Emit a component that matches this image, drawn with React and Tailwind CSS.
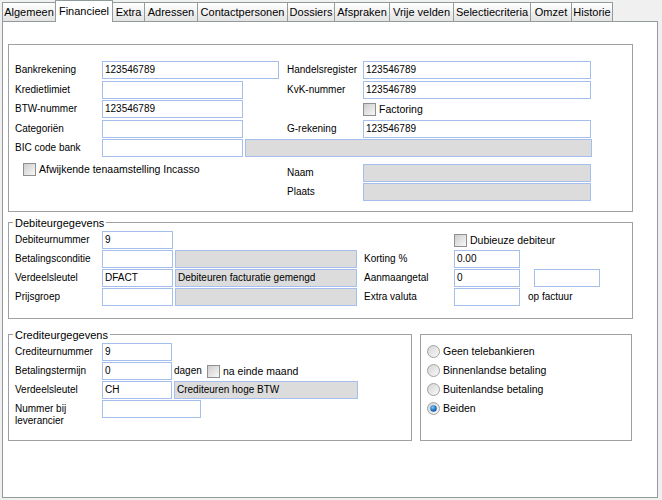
import React from "react";

function Label({ className = "w-[87px]", children }) {
  return <div className={`${className} shrink-0 text-[10px] leading-[12px] whitespace-nowrap`}>{children}</div>;
}

function Field({ className, gray, children }) {
  return (
    <div
      className={`${className} h-[18px] shrink-0 border border-[#a5bfec] ${gray ? "bg-[#dcdcdc]" : "bg-white"} px-[2px] text-[10px] leading-[16px] whitespace-nowrap overflow-hidden`}
    >
      {children}
    </div>
  );
}

function Check({ label }) {
  return (
    <div className="flex items-center">
      <span className="block h-[13px] w-[13px] shrink-0 border border-[#8e8f8f] bg-linear-to-br from-[#cdcdcd] to-[#f8f8f8]" />
      <span className="ml-[3px] text-[10.5px] leading-[13px] whitespace-nowrap">{label}</span>
    </div>
  );
}

function Radio({ label, checked, id }) {
  return (
    <div className="flex h-[19px] items-center">
      <svg width="13" height="13" viewBox="0 0 13 13" className="shrink-0">
        <defs>
          <linearGradient id={`rg${id}`} x1="0" y1="0" x2="1" y2="1">
            <stop offset="0" stopColor="#d2d2d2" />
            <stop offset="1" stopColor="#fbfbfb" />
          </linearGradient>
          <radialGradient id={`rb${id}`} cx="0.4" cy="0.35" r="0.7">
            <stop offset="0" stopColor="#8fcaf5" />
            <stop offset="0.5" stopColor="#2a83d3" />
            <stop offset="1" stopColor="#0a4a8f" />
          </radialGradient>
        </defs>
        <circle cx="6.5" cy="6.5" r="6" fill={`url(#rg${id})`} stroke="#a2a2a2" strokeWidth="1" />
        {checked && <circle cx="6.5" cy="6.5" r="3.2" fill={`url(#rb${id})`} />}
      </svg>
      <span className="ml-[3px] text-[10.5px] leading-[13px] whitespace-nowrap">{label}</span>
    </div>
  );
}

function Legend({ children }) {
  return (
    <span className="absolute left-[4px] top-[-7px] bg-white px-[2px] text-[11px] leading-[14px]">{children}</span>
  );
}

const tabBase = "h-[19px] shrink-0 border-t border-[#919b9c] bg-linear-to-b from-white to-[#e3e3e3] text-center text-[11px] leading-[18px] whitespace-nowrap";

export default function App() {
  return (
    <div className="h-[500px] w-[662px] overflow-hidden bg-[#f0f0f0] font-['Liberation_Sans',Arial,sans-serif] text-black">
      <div className="relative z-10 flex h-[21px] items-end pl-[2px]">
        <div className={`${tabBase} w-[53px] border-l`}>Algemeen</div>
        <div className="-mb-px h-[22px] w-[58px] shrink-0 border-l border-r border-t border-[#919b9c] bg-white text-center text-[11px] leading-[20px]">Financieel</div>
        <div className={`${tabBase} w-[31px]`}>Extra</div>
        <div className={`${tabBase} w-[53px] border-l`}>Adressen</div>
        <div className={`${tabBase} w-[90px] border-l`}>Contactpersonen</div>
        <div className={`${tabBase} w-[47px] border-l`}>Dossiers</div>
        <div className={`${tabBase} w-[55px] border-l`}>Afspraken</div>
        <div className={`${tabBase} w-[64px] border-l`}>Vrije velden</div>
        <div className={`${tabBase} w-[77px] border-l`}>Selectiecriteria</div>
        <div className={`${tabBase} w-[41px] border-l`}>Omzet</div>
        <div className={`${tabBase} w-[42px] border-l border-r`}>Historie</div>
      </div>

      <div className="ml-[2px] h-[477px] w-[656px] border border-[#919b9c] bg-white pl-[5px] pt-[22px]">
        {/* Group 1 */}
        <div className="w-[625px] border border-[#a0a0a0] pb-[10px] pl-[6px] pt-[16px]">
          <div className="flex h-[18px] items-center">
            <Label>Bankrekening</Label>
            <Field className="w-[177px]">123546789</Field>
            <div className="w-[8px] shrink-0" />
            <Label className="w-[76px]">Handelsregister</Label>
            <Field className="w-[228px]">123546789</Field>
          </div>
          <div className="mt-[2px] flex h-[18px] items-center">
            <Label>Kredietlimiet</Label>
            <Field className="w-[141px]" />
            <div className="w-[44px] shrink-0" />
            <Label className="w-[76px]">KvK-nummer</Label>
            <Field className="w-[228px]">123546789</Field>
          </div>
          <div className="mt-[1px] flex h-[18px] items-center">
            <Label>BTW-nummer</Label>
            <Field className="w-[141px]">123546789</Field>
            <div className="w-[120px] shrink-0" />
            <Check label="Factoring" />
          </div>
          <div className="mt-[2px] flex h-[18px] items-center">
            <Label>Categoriën</Label>
            <Field className="w-[141px]" />
            <div className="w-[44px] shrink-0" />
            <Label className="w-[76px]">G-rekening</Label>
            <Field className="w-[228px]">123546789</Field>
          </div>
          <div className="mt-[1px] flex h-[18px] items-center">
            <Label>BIC code bank</Label>
            <Field className="w-[141px]" />
            <div className="w-[2px] shrink-0" />
            <Field className="w-[347px]" gray />
          </div>
          <div className="mt-[7px] flex h-[18px] items-center">
            <div className="-mt-[1px] flex w-[272px] shrink-0 self-start pl-[8px]">
              <Check label="Afwijkende tenaamstelling Incasso" />
            </div>
            <Label className="w-[76px]">Naam</Label>
            <Field className="w-[228px]" gray />
          </div>
          <div className="mt-[1px] flex h-[18px] items-center">
            <div className="w-[272px] shrink-0" />
            <Label className="w-[76px]">Plaats</Label>
            <Field className="w-[228px]" gray />
          </div>
        </div>

        {/* Group 2 */}
        <div className="relative mt-[10px] w-[625px] border border-[#a0a0a0] pb-[12px] pl-[6px] pt-[8px]">
          <Legend>Debiteurgegevens</Legend>
          <div className="flex h-[18px] items-center">
            <Label>Debiteurnummer</Label>
            <Field className="w-[71px]">9</Field>
            <div className="w-[281px] shrink-0" />
            <Check label="Dubieuze debiteur" />
          </div>
          <div className="mt-[1px] flex h-[18px] items-center">
            <Label>Betalingsconditie</Label>
            <Field className="w-[71px]" />
            <div className="w-[2px] shrink-0" />
            <Field className="w-[182px]" gray />
            <div className="w-[7px] shrink-0" />
            <Label className="w-[90px]">Korting %</Label>
            <Field className="w-[66px]">0.00</Field>
          </div>
          <div className="mt-[1px] flex h-[18px] items-center">
            <Label>Verdeelsleutel</Label>
            <Field className="w-[71px]">DFACT</Field>
            <div className="w-[2px] shrink-0" />
            <Field className="w-[182px]" gray>Debiteuren facturatie gemengd</Field>
            <div className="w-[7px] shrink-0" />
            <Label className="w-[90px]">Aanmaangetal</Label>
            <Field className="w-[66px]">0</Field>
            <div className="w-[14px] shrink-0" />
            <Field className="w-[66px]" />
          </div>
          <div className="mt-[1px] flex h-[18px] items-center">
            <Label>Prijsgroep</Label>
            <Field className="w-[71px]" />
            <div className="w-[2px] shrink-0" />
            <Field className="w-[182px]" gray />
            <div className="w-[7px] shrink-0" />
            <Label className="w-[90px]">Extra valuta</Label>
            <Field className="w-[66px]" />
            <div className="w-[8px] shrink-0" />
            <Label className="w-auto">op factuur</Label>
          </div>
        </div>

        {/* Groups 3 and 4 */}
        <div className="mt-[15px] flex gap-[8px]">
          <div className="relative h-[107px] w-[404px] border border-[#a0a0a0] pl-[6px] pt-[8px]">
            <Legend>Crediteurgegevens</Legend>
            <div className="flex h-[18px] items-center">
              <Label>Crediteurnummer</Label>
              <Field className="w-[70px]">9</Field>
            </div>
            <div className="mt-[1px] flex h-[18px] items-center">
              <Label>Betalingstermijn</Label>
              <Field className="w-[70px]">0</Field>
              <div className="w-[2px] shrink-0" />
              <Label className="w-[33px]">dagen</Label>
              <Check label="na einde maand" />
            </div>
            <div className="mt-[1px] flex h-[18px] items-center">
              <Label>Verdeelsleutel</Label>
              <Field className="w-[70px]">CH</Field>
              <div className="w-[2px] shrink-0" />
              <Field className="w-[184px]" gray>Crediteuren hoge BTW</Field>
            </div>
            <div className="mt-[1px] flex items-start">
              <div className="w-[87px] shrink-0 pt-[3px] text-[10px] leading-[12px]">
                Nummer bij
                <br />
                leverancier
              </div>
              <Field className="w-[99px]" />
            </div>
          </div>
          <div className="h-[107px] w-[212px] border border-[#a0a0a0] pl-[6px] pt-[7px]">
            <Radio id="a" label="Geen telebankieren" />
            <Radio id="b" label="Binnenlandse betaling" />
            <Radio id="c" label="Buitenlandse betaling" />
            <Radio id="d" label="Beiden" checked />
          </div>
        </div>
      </div>
    </div>
  );
}
